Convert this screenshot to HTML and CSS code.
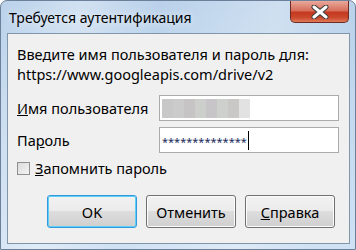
FILE: index.html
```html
<!DOCTYPE html>
<html>
<head>
<meta charset="UTF-8">
<link rel="stylesheet" href="styles.css">
<title>Требуется аутентификация</title>
</head>
<body>
<div class="window">
	<div class="title_bar">
		<span class="title">Требуется аутентификация</span>
		<div class="close_btn">
			<svg width="22" height="14" viewBox="0 0 22 14">
				<path d="M5 2 L17 12 M17 2 L5 12" stroke="#3a3a3a" stroke-width="5" stroke-linecap="round"/>
				<path d="M5 2 L17 12 M17 2 L5 12" stroke="#ffffff" stroke-width="3" stroke-linecap="round"/>
			</svg>
		</div>
	</div>
	<div class="client">
		<div class="prompt">
			<div>Введите имя пользователя и пароль для:</div>
			<div>https://www.googleapis.com/drive/v2</div>
		</div>
		<div class="field_row first_row">
			<label class="field_label"><u>И</u>мя пользователя</label>
			<div class="input">
				<div class="blur">
					<span class="b1"></span><span class="b2"></span><span class="b3"></span><span class="b4"></span><span class="b5"></span><span class="b6"></span><span class="b7"></span><span class="b8"></span>
				</div>
			</div>
		</div>
		<div class="field_row">
			<label class="field_label">Па<u>р</u>оль</label>
			<div class="input">
				<span class="stars">**************</span><span class="caret"></span>
			</div>
		</div>
		<div class="check_row">
			<span class="checkbox"></span>
			<span><u>З</u>апомнить пароль</span>
		</div>
		<div class="buttons">
			<div class="btn btn_default">OK</div>
			<div class="btn">Отменить</div>
			<div class="btn"><u>С</u>правка</div>
		</div>
	</div>
</div>
</body>
</html>
```
FILE: styles.css
```css
html, body {
	margin: 0;
	padding: 0;
	background: #ffffff;
}
.window {
	width: 356px;
	height: 250px;
	box-sizing: border-box;
	border: 1px solid #6d8099;
	border-radius: 7px 7px 0 0;
	background:
		linear-gradient(100deg, rgba(255,255,255,0) 0%, rgba(255,255,255,0.35) 20%, rgba(255,255,255,0) 40%, rgba(255,255,255,0.3) 70%, rgba(255,255,255,0) 90%),
		linear-gradient(to bottom, #b9d1ea 0%, #c4d9ee 40%, #cfe1f3 100%);
	display: flex;
	flex-direction: column;
	font-family: "Noto Sans", "Open Sans", sans-serif;
	color: #000;
}
.title_bar {
	height: 32px;
	display: flex;
	justify-content: space-between;
	align-items: flex-start;
}
.title {
	margin: 7px 0 0 8px;
	font-size: 14px;
	color: #000;
	text-shadow: 0 0 8px rgba(255,255,255,0.9);
}
.close_btn {
	width: 59px;
	height: 22px;
	margin-right: 6px;
	box-sizing: border-box;
	border: 1px solid #6b2b22;
	border-top: 0;
	border-radius: 0 0 5px 5px;
	background: linear-gradient(to bottom, #e9a99c 0%, #d7705d 45%, #c3391f 55%, #cc4a2e 80%, #e07a5a 100%);
	display: flex;
	align-items: center;
	justify-content: center;
}
.client {
	flex: 1;
	margin: 0 5px 5px 6px;
	border: 1px solid #8296ab;
	background: #f0f0f0;
	font-size: 14.5px;
	padding: 10px 9px 0 9px;
	display: flex;
	flex-direction: column;
}
.prompt {
	line-height: 20px;
}
.field_row {
	display: flex;
	align-items: center;
	height: 26px;
	margin-top: 6px;
}
.first_row {
	margin-top: 11px;
}
.field_label {
	width: 142px;
}
.input {
	width: 180px;
	height: 26px;
	box-sizing: border-box;
	border: 1px solid #ababab;
	background: #fff;
	display: flex;
	align-items: center;
	padding-left: 2px;
}
.blur {
	display: flex;
	height: 19px;
}
.blur span {
	width: 11px;
	height: 19px;
}
.b1 { background: #c8c8c8; }
.b2 { background: #cbcbcb; }
.b3 { background: #c6c4c4; }
.b4 { background: #cdcfcd; }
.b5 { background: #c8c5c9; }
.b6 { background: #cdd0cd; }
.b7 { background: #c9c8c6; }
.b8 { background: #e2e2e2; }
.stars {
	font-size: 11px;
	color: #1a2a5a;
	margin-top: 3px;
}
.caret {
	width: 1px;
	height: 19px;
	background: #000;
	margin-left: 1px;
}
.check_row {
	display: flex;
	align-items: center;
	height: 20px;
	margin-top: 5px;
}
.checkbox {
	width: 11px;
	height: 11px;
	border: 1px solid #8f8f8f;
	background: linear-gradient(135deg, #dcdcdc 0%, #f4f4f4 100%);
	margin-right: 5px;
}
.buttons {
	display: flex;
	justify-content: flex-end;
	gap: 9px;
	margin-top: 17px;
	padding-right: 5px;
}
.btn {
	width: 90px;
	height: 33px;
	box-sizing: border-box;
	border: 1px solid #707070;
	border-radius: 3px;
	background: linear-gradient(to bottom, #f2f2f2 0%, #ebebeb 50%, #dddddd 50%, #cfcfcf 100%);
	box-shadow: inset 0 0 0 1px #fcfcfc;
	display: flex;
	align-items: center;
	justify-content: center;
	font-size: 14.5px;
}
.btn_default {
	border-color: #3399dd;
	box-shadow: inset 0 0 0 1px #5ed0f8;
}
```
